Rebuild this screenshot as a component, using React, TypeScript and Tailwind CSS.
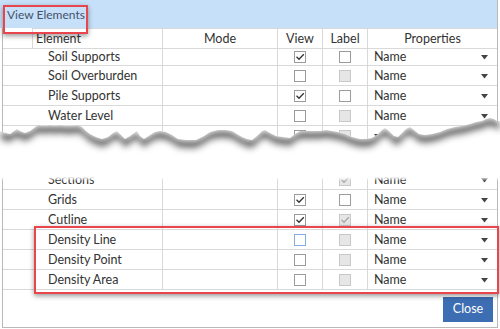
type Box = 'none' | 'off' | 'on' | 'dis' | 'disOn' | 'focus'

interface RowData {
  name: string
  view: Box
  label: Box
}

const topRows: RowData[] = [
  { name: 'Soil Supports', view: 'on', label: 'off' },
  { name: 'Soil Overburden', view: 'off', label: 'dis' },
  { name: 'Pile Supports', view: 'on', label: 'off' },
  { name: 'Water Level', view: 'off', label: 'dis' },
]

const bottomRows: RowData[] = [
  { name: 'Grids', view: 'on', label: 'off' },
  { name: 'Cutline', view: 'on', label: 'disOn' },
  { name: 'Density Line', view: 'focus', label: 'dis' },
  { name: 'Density Point', view: 'off', label: 'dis' },
  { name: 'Density Area', view: 'off', label: 'dis' },
]

// jagged edge of the torn screenshot
const wave: [number, number][] = [
  [0, 131], [6, 133], [10, 134], [14, 131], [17, 129], [20, 131], [25, 133], [30, 131], [34, 128],
  [38, 125], [45, 126], [50, 125], [55, 126], [60, 125], [65, 126], [72, 126], [78, 125], [82, 127],
  [86, 131], [90, 134], [96, 137], [102, 139], [108, 137], [113, 133], [117, 131], [121, 135],
  [125, 139], [130, 136], [134, 133], [137, 131], [140, 136], [144, 139], [150, 135], [155, 132],
  [160, 131], [166, 132], [172, 135], [178, 139], [186, 140], [196, 140], [204, 136], [210, 132],
  [218, 130], [226, 130], [232, 131], [237, 134], [242, 137], [247, 139], [252, 140], [257, 136],
  [262, 131], [265, 130], [270, 133], [276, 136], [283, 137], [290, 138], [295, 134], [300, 131],
  [312, 131], [320, 131], [326, 130], [332, 131], [338, 132], [345, 134], [352, 137], [360, 139],
  [366, 139], [372, 138], [378, 134], [382, 130], [385, 128], [389, 131], [394, 136], [398, 137],
  [402, 133], [406, 129], [410, 127], [414, 130], [419, 134], [425, 135], [432, 134], [440, 132],
  [447, 129], [455, 127], [462, 126], [470, 124], [476, 122], [482, 121], [486, 119], [490, 118],
  [494, 119], [497, 121], [500, 121],
]

const wavePath =
  'M' + wave.map(([x, y]) => `${x},${y}`).join(' L') + ' L500,177 L0,177 Z'

function CheckBox({ state }: { state: Box }) {
  if (state === 'none') return null
  let cls = 'bg-white border-[#9c9c9c]'
  if (state === 'dis' || state === 'disOn') cls = 'bg-[#e6e6e6] border-[#c8c8c8]'
  if (state === 'focus') cls = 'bg-white border-[#82acdf]'
  return (
    <div className={`w-[12px] h-[12px] border ${cls} flex items-center justify-center`}>
      {(state === 'on' || state === 'disOn') && (
        <svg width="10" height="10" viewBox="0 0 10 10">
          <polyline
            points="1.5,4.8 4,7.3 8.8,2.2"
            fill="none"
            stroke={state === 'on' ? '#333' : '#a9a9a9'}
            strokeWidth="1.3"
          />
        </svg>
      )}
    </div>
  )
}

function Arrow() {
  return (
    <svg width="7" height="5" viewBox="0 0 7 5">
      <polygon points="0,0 7,0 3.5,4.5" fill="#444" />
    </svg>
  )
}

function Row({ row, h, caret }: { row: RowData; h: string; caret?: boolean }) {
  return (
    <div className={`flex ${h} border-b border-[#d9d9d9] text-[#333]`}>
      <div className="w-[160px] border-r border-[#d9d9d9] flex items-center pl-[45px] pt-[1px] relative">
        {caret && (
          <svg className="absolute left-[11px] top-[5px]" width="9" height="6" viewBox="0 0 9 6">
            <polyline points="1,5 4.5,1.5 8,5" fill="none" stroke="#555" strokeWidth="1.2" />
          </svg>
        )}
        {row.name}
      </div>
      <div className="w-[115px] border-r border-[#d9d9d9]" />
      <div className="w-[45px] border-r border-[#d9d9d9] flex items-center justify-center">
        <CheckBox state={row.view} />
      </div>
      <div className="w-[45px] border-r border-[#d9d9d9] flex items-center justify-center">
        <CheckBox state={row.label} />
      </div>
      <div className="flex-1 flex items-center justify-between pl-[6px] pr-[9px] pt-[1px]">
        {row.name ? 'Name' : ''}
        <Arrow />
      </div>
    </div>
  )
}

export default function App() {
  return (
    <div className="relative w-[500px] h-[329px] bg-white overflow-hidden font-['Lato','Liberation_Sans',sans-serif] text-[12.5px] leading-none">
      {/* Title bar */}
      <div className="w-[498px] h-[28px] bg-[#c6e0f9] border-r border-[#b9b9b9] flex items-center pl-[7px] pt-[2px] text-[#44516b] text-[12px]">
        View Elements
      </div>

      {/* Body */}
      <div className="ml-[2px] w-[496px] border-l border-r border-b border-[#b9b9b9] flex flex-col">
        {/* Header */}
        <div className="flex h-[21px] border-b border-[#d9d9d9] text-[#333]">
          <div className="w-[29px]" />
          <div className="w-[131px] border-l border-r border-t border-[#d9d9d9] flex items-center pl-[3px] pt-[1px]">
            Element
          </div>
          <div className="w-[115px] border-r border-t border-[#d9d9d9] flex items-center justify-center pt-[1px]">
            Mode
          </div>
          <div className="w-[45px] border-r border-t border-[#d9d9d9] flex items-center justify-center pt-[1px]">
            View
          </div>
          <div className="w-[45px] border-r border-t border-[#d9d9d9] flex items-center justify-center pt-[1px]">
            Label
          </div>
          <div className="flex-1 border-t border-[#d9d9d9] flex items-center justify-center pt-[1px]">
            Properties
          </div>
        </div>

        <Row row={topRows[0]} h="h-[17px]" />
        {topRows.slice(1).map((r) => (
          <Row key={r.name} row={r} h="h-[20px]" />
        ))}
        <Row row={{ name: '', view: 'off', label: 'dis' }} h="h-[20px]" caret />

        <div className="h-[24px]" />

        <Row row={{ name: 'Sections', view: 'none', label: 'disOn' }} h="h-[20px]" />
        {bottomRows.map((r) => (
          <Row key={r.name} row={r} h="h-[20px]" />
        ))}

        {/* Footer */}
        <div className="h-[37px] flex justify-end items-start pt-[7px] pr-[4px]">
          <button className="w-[50px] h-[25px] bg-[#3d6db3] text-white text-[12.5px] flex items-center justify-center">
            Close
          </button>
        </div>
      </div>

      {/* Torn edge */}
      <svg
        className="absolute left-0 top-[110px]"
        width="500"
        height="74"
        viewBox="0 110 500 74"
      >
        <defs>
          <filter id="tear" filterUnits="userSpaceOnUse" x="-10" y="100" width="520" height="90">
            <feOffset in="SourceAlpha" dy="9" result="off" />
            <feComposite in="SourceAlpha" in2="off" operator="out" result="edge" />
            <feGaussianBlur in="edge" stdDeviation="3" result="blur" />
            <feFlood floodColor="#666" />
            <feComposite in2="blur" operator="in" result="sh" />
            <feComposite in="sh" in2="SourceAlpha" operator="in" result="inner" />
            <feMerge>
              <feMergeNode in="SourceGraphic" />
              <feMergeNode in="inner" />
            </feMerge>
          </filter>
          <linearGradient id="fade" x1="0" y1="0" x2="0" y2="1">
            <stop offset="0" stopColor="#fff" stopOpacity="1" />
            <stop offset="1" stopColor="#fff" stopOpacity="0" />
          </linearGradient>
        </defs>
        <path d={wavePath} fill="#fff" filter="url(#tear)" />
        <rect x="0" y="177" width="500" height="4" fill="url(#fade)" />
      </svg>

      {/* Highlight boxes */}
      <div className="absolute left-[3px] top-[5px] w-[85px] h-[29px] border-[2.5px] border-[#e8454c] shadow-[0_2px_5px_rgba(0,0,0,0.4)]" />
      <div className="absolute left-[34px] top-[226px] w-[465px] h-[68px] border-[2.5px] border-[#e8454c] shadow-[0_2px_5px_rgba(0,0,0,0.4)]" />
    </div>
  )
}
